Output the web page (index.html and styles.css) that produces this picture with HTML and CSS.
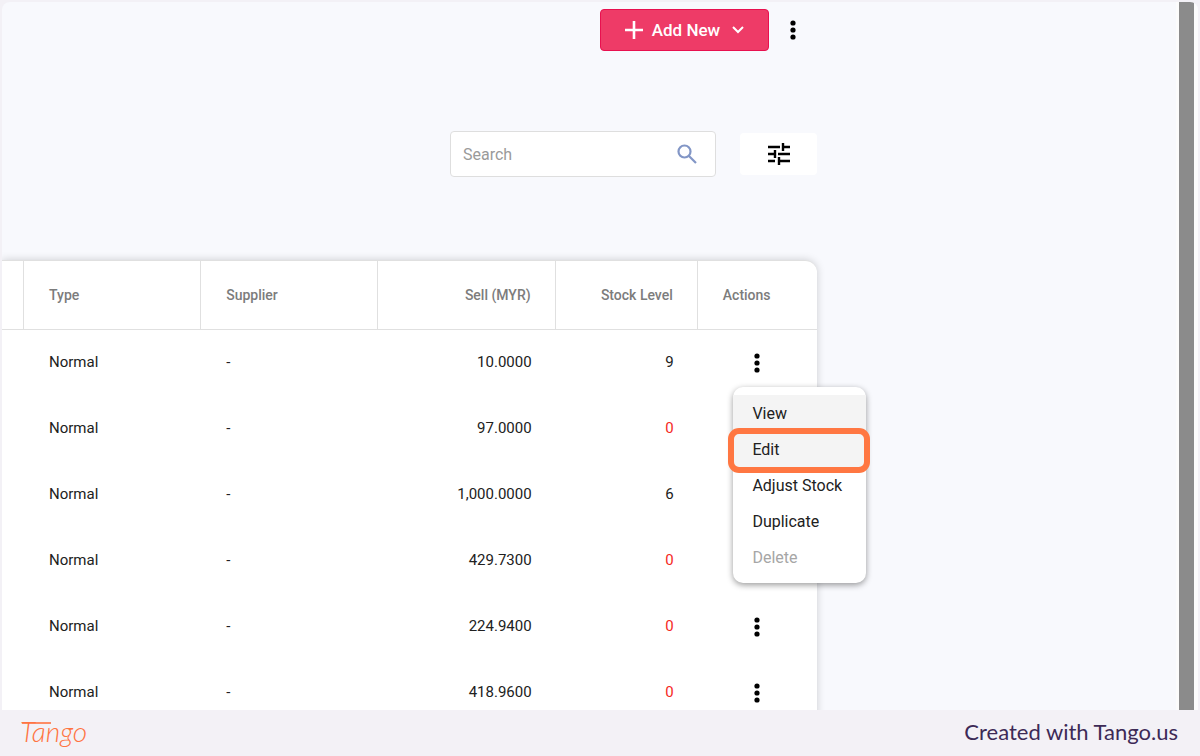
FILE: index.html
```
<!DOCTYPE html>
<html lang="en">
<head>
  <meta charset="UTF-8" />
  <meta name="viewport" content="width=device-width, initial-scale=1" />
  <title>Products</title>
  <link rel="stylesheet" href="styles.css">
</head>
<body>
  <div class="stage">
    <main class="content">
      <div class="toolbar">
        <button type="button" class="add-btn">
          <svg width="18" height="18" viewBox="0 0 18 18" aria-hidden="true"><path d="M9 0v18M0 9h18" stroke="currentColor" stroke-width="2.6" /></svg>
          <span>Add New</span>
          <svg class="chevron" width="12" height="8" viewBox="0 0 12 8" aria-hidden="true"><path d="M1 1l5 5 5-5" fill="none" stroke="currentColor" stroke-width="2" /></svg>
        </button>
        <button type="button" class="dots-btn" aria-label="More options">
          <svg width="8" height="20" viewBox="0 0 8 20"><circle cx="4" cy="3" r="2.6" /><circle cx="4" cy="10" r="2.6" /><circle cx="4" cy="17" r="2.6" /></svg>
        </button>
      </div>

      <div class="filters">
        <label class="search">
          <input type="search" placeholder="Search" aria-label="Search" />
          <svg width="20" height="20" viewBox="0 0 20 20" aria-hidden="true"><circle cx="7.5" cy="7.5" r="6" /><path d="M12 12l7 7" /></svg>
        </label>
        <button type="button" class="filter-btn" aria-label="Filters">
          <svg width="24" height="24" viewBox="0 0 24 24"><path d="M1 5h12M16 5h7M16 1v8M1 12h7M11 12h12M8 8v8M1 19h7M11 19h12M12 15v8" /></svg>
        </button>
      </div>

      <table class="items">
        <colgroup>
          <col class="col-edge"><col class="col-wide"><col class="col-wide"><col class="col-wide"><col class="col-stock"><col class="col-actions">
        </colgroup>
        <thead>
          <tr>
            <th></th>
            <th>Type</th>
            <th>Supplier</th>
            <th class="num">Sell (MYR)</th>
            <th class="num">Stock Level</th>
            <th>Actions</th>
          </tr>
        </thead>
        <tbody>
          <tr>
            <td></td>
            <td>Normal</td>
            <td>-</td>
            <td class="num">10.0000</td>
            <td class="num">9</td>
            <td class="actions">
              <div class="menu-anchor">
                <button type="button" class="dots-btn" aria-label="Row actions" aria-expanded="true">
                  <svg width="8" height="20" viewBox="0 0 8 20"><circle cx="4" cy="3" r="2.6" /><circle cx="4" cy="10" r="2.6" /><circle cx="4" cy="17" r="2.6" /></svg>
                </button>
                <div class="menu">
                  <button type="button" class="active">View</button>
                  <button type="button" class="active highlighted">Edit</button>
                  <button type="button">Adjust Stock</button>
                  <button type="button">Duplicate</button>
                  <button type="button" disabled>Delete</button>
                </div>
              </div>
            </td>
          </tr>
          <tr>
            <td></td>
            <td>Normal</td>
            <td>-</td>
            <td class="num">97.0000</td>
            <td class="num empty">0</td>
            <td></td>
          </tr>
          <tr>
            <td></td>
            <td>Normal</td>
            <td>-</td>
            <td class="num">1,000.0000</td>
            <td class="num">6</td>
            <td></td>
          </tr>
          <tr>
            <td></td>
            <td>Normal</td>
            <td>-</td>
            <td class="num">429.7300</td>
            <td class="num empty">0</td>
            <td></td>
          </tr>
          <tr>
            <td></td>
            <td>Normal</td>
            <td>-</td>
            <td class="num">224.9400</td>
            <td class="num empty">0</td>
            <td class="actions">
              <button type="button" class="dots-btn" aria-label="Row actions">
                <svg width="8" height="20" viewBox="0 0 8 20"><circle cx="4" cy="3" r="2.6" /><circle cx="4" cy="10" r="2.6" /><circle cx="4" cy="17" r="2.6" /></svg>
              </button>
            </td>
          </tr>
          <tr>
            <td></td>
            <td>Normal</td>
            <td>-</td>
            <td class="num">418.9600</td>
            <td class="num empty">0</td>
            <td class="actions">
              <button type="button" class="dots-btn" aria-label="Row actions">
                <svg width="8" height="20" viewBox="0 0 8 20"><circle cx="4" cy="3" r="2.6" /><circle cx="4" cy="10" r="2.6" /><circle cx="4" cy="17" r="2.6" /></svg>
              </button>
            </td>
          </tr>
        </tbody>
      </table>
    </main>
    <div class="scroll-track"><div class="scroll-thumb"></div></div>
  </div>

  <footer class="footer">
    <svg class="brand" width="76" height="42" viewBox="0 0 76 42" role="img" aria-label="Tango">
      <text x="0" y="31">Tango</text>
      <path d="M2 12h29" />
    </svg>
    <span class="credit">Created with Tango.us</span>
  </footer>
</body>
</html>
```
FILE: styles.css
```
* {
  box-sizing: border-box;
}
body {
  margin: 0;
  height: 100vh;
  display: flex;
  flex-direction: column;
  background: #f3f1f6;
  color: #212121;
  font-family: Roboto, sans-serif;
  font-size: 15px;
}
button {
  border: none;
  background: none;
  padding: 0;
  color: inherit;
  font: inherit;
  cursor: pointer;
}
.stage {
  flex: 1;
  min-height: 0;
  display: flex;
  margin: 2px 2px 0;
  overflow: hidden;
  border-radius: 8px 8px 0 0;
  background: #f8f9fd;
}
.content {
  flex: 1;
  padding: 7px 359px 0 0;
}

/* top controls */
.toolbar {
  display: flex;
  justify-content: flex-end;
  align-items: center;
  gap: 12px;
  padding-right: 12px;
}
.add-btn {
  display: flex;
  align-items: center;
  justify-content: center;
  gap: 9px;
  width: 169px;
  height: 42px;
  border: 1px solid #e8104f;
  border-radius: 4px;
  background: #ee3b67;
  color: #fff;
  font-size: 17px;
  font-weight: 500;
}
.chevron {
  margin-left: 3px;
}
.dots-btn {
  display: inline-flex;
  justify-content: center;
  align-items: center;
  width: 24px;
  height: 24px;
  color: #000;
}
.dots-btn svg {
  fill: currentColor;
}
.filters {
  display: flex;
  justify-content: flex-end;
  align-items: center;
  gap: 24px;
  margin: 80px 0 83px;
}
.search {
  display: flex;
  align-items: center;
  width: 266px;
  height: 46px;
  padding: 0 18px 0 12px;
  border: 1px solid #dedede;
  border-radius: 4px;
  background: #fff;
}
.search input {
  flex: 1;
  min-width: 0;
  padding: 0;
  border: none;
  outline: none;
  background: none;
  font: inherit;
  font-size: 16px;
}
.search input::placeholder {
  color: #9a9a9a;
}
.search svg {
  fill: none;
  stroke: #8296c6;
  stroke-width: 2.2;
}
.filter-btn {
  display: flex;
  justify-content: center;
  align-items: center;
  width: 77px;
  height: 42px;
  border-radius: 4px;
  background: #fff;
}
.filter-btn svg {
  fill: none;
  stroke: #000;
  stroke-width: 2.4;
}

/* items table */
.items {
  width: 100%;
  table-layout: fixed;
  border-collapse: separate;
  border-spacing: 0;
  border-top: 1px solid #e0e0e0;
  border-radius: 0 12px 0 0;
  background: #fff;
  box-shadow: 0 0 8px rgba(0, 0, 0, 0.18);
}
.col-edge { width: 22px; }
.col-wide { width: 177px; }
.col-stock { width: 142px; }
.col-actions { width: 119px; }
.items th {
  height: 69px;
  padding: 0 24px 0 25px;
  border-right: 1px solid #e0e0e0;
  border-bottom: 1px solid #e0e0e0;
  color: #7c7c7c;
  font-size: 14px;
  font-weight: 500;
  text-align: left;
}
.items th:first-child,
.items td:first-child {
  padding: 0;
}
.items th:last-child {
  border-right: none;
}
.items td {
  height: 66px;
  padding: 0 24px 2px 25px;
}
.items .num {
  text-align: right;
}
.items .empty {
  color: #f5281e;
}
.items .actions {
  padding: 2px 0 0;
  text-align: center;
}

/* row menu */
.menu-anchor {
  position: relative;
  display: inline-flex;
}
.menu {
  position: absolute;
  top: 36px;
  left: -12px;
  z-index: 1;
  width: 133px;
  padding: 8px 0;
  border-radius: 10px;
  background: #fff;
  box-shadow: 0 2px 6px rgba(0, 0, 0, 0.4);
}
.menu button {
  position: relative;
  display: block;
  width: 100%;
  height: 36px;
  padding: 0 19px;
  font-size: 16px;
  text-align: left;
  white-space: nowrap;
}
.menu .active {
  background: #f4f4f4;
}
.menu button:disabled {
  color: #a6a6a6;
}
.menu .highlighted::after {
  content: "";
  position: absolute;
  inset: -3px -4px -6px -5px;
  z-index: 1;
  border: 6px solid #ff7742;
  border-radius: 11px;
}

.scroll-track {
  width: 22px;
  padding: 0 4px 0 3px;
  background: #fcfcfc;
}
.scroll-thumb {
  height: 100%;
  background: #8b8b8b;
}

.footer {
  display: flex;
  justify-content: space-between;
  align-items: center;
  height: 46px;
  padding: 0 22px 3px 20px;
}
.brand text {
  fill: #ff7442;
  font-family: Lato, sans-serif;
  font-size: 28px;
  font-style: italic;
  font-weight: 300;
}
.brand path {
  stroke: #ff7442;
  stroke-width: 1.6;
}
.credit {
  color: #3d2a56;
  font-family: Lato, sans-serif;
  font-size: 22px;
}
```
